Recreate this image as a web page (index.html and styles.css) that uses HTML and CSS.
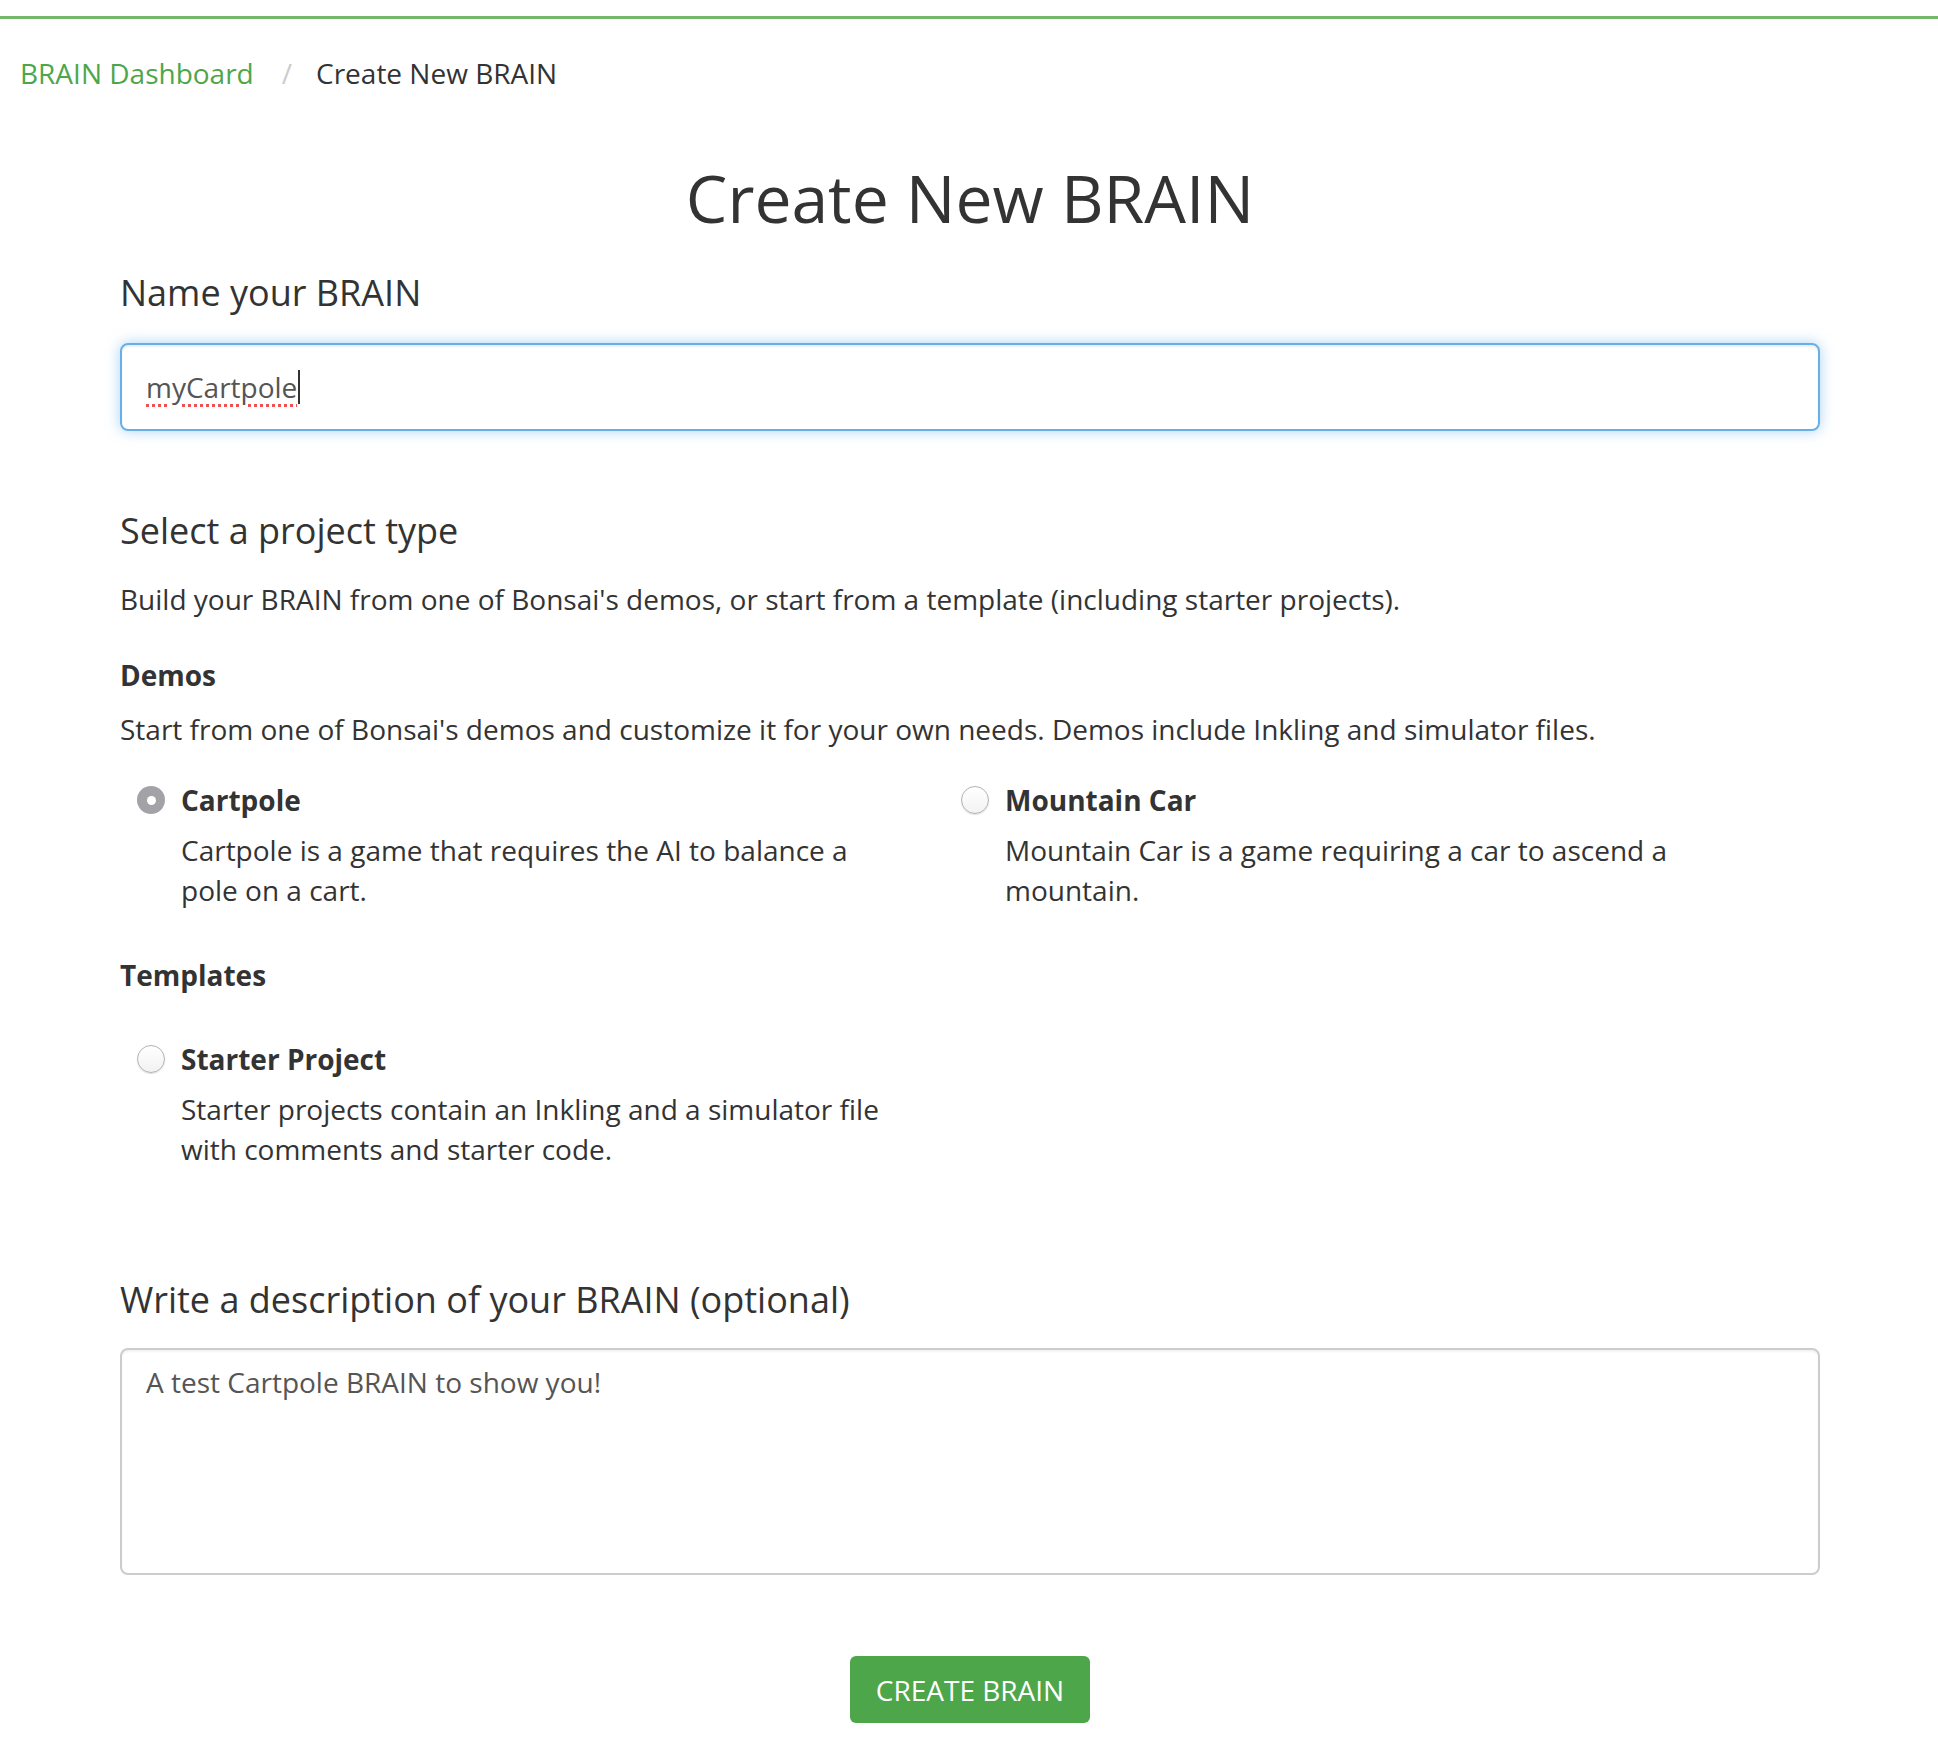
FILE: index.html
```html
<!DOCTYPE html>
<html lang="en">
<head>
<meta charset="utf-8">
<title>Create New BRAIN</title>
<link rel="stylesheet" href="styles.css">
</head>
<body>
<div class="topbar"></div>
<nav class="breadcrumb">
  <a class="crumb-link" href="#">BRAIN Dashboard</a>
  <span class="crumb-sep">/</span>
  <span class="crumb-current">Create New BRAIN</span>
</nav>
<main class="page">
  <h1 class="title">Create New BRAIN</h1>
  <h4 class="heading heading-name">Name your BRAIN</h4>
  <div class="input" role="textbox"><span class="typo">myCartpole</span><span class="caret"></span></div>

  <h4 class="heading heading-type">Select a project type</h4>
  <p class="text intro">Build your BRAIN from one of Bonsai's demos, or start from a template (including starter projects).</p>

  <div class="label label-demos">Demos</div>
  <p class="text sublead">Start from one of Bonsai's demos and customize it for your own needs. Demos include Inkling and simulator files.</p>

  <div class="options options-demos">
    <div class="option">
      <div class="option-head"><span class="radio radio-checked"></span><span class="option-title">Cartpole</span></div>
      <p class="option-desc">Cartpole is a game that requires the AI to balance a pole on a cart.</p>
    </div>
    <div class="option">
      <div class="option-head"><span class="radio"></span><span class="option-title">Mountain Car</span></div>
      <p class="option-desc">Mountain Car is a game requiring a car to ascend a mountain.</p>
    </div>
  </div>

  <div class="label label-templates">Templates</div>

  <div class="options options-templates">
    <div class="option">
      <div class="option-head"><span class="radio"></span><span class="option-title">Starter Project</span></div>
      <p class="option-desc">Starter projects contain an Inkling and a simulator file with comments and starter code.</p>
    </div>
  </div>

  <h4 class="heading heading-desc">Write a description of your BRAIN (optional)</h4>
  <div class="textarea" role="textbox">A test Cartpole BRAIN to show you!</div>

  <div class="actions"><button class="btn" type="button">CREATE BRAIN</button></div>
</main>
</body>
</html>
```
FILE: styles.css
```css
* { box-sizing: border-box; }
html, body { margin: 0; padding: 0; background: #fff; }
body {
  font-family: "Open Sans", "Liberation Sans", sans-serif;
  font-size: 28px;
  line-height: 40px;
  color: #333;
}
.topbar { margin-top: 16px; height: 3px; background: #74b86c; }

.breadcrumb {
  margin-top: 34px;
  padding-left: 20px;
  display: flex;
  align-items: baseline;
  height: 40px;
}
.crumb-link { color: #4ea64a; text-decoration: none; }
.crumb-sep { color: #ccc; margin: 0 24px 0 28px; }
.crumb-current { color: #333; }

.page { width: 1700px; margin-left: 120px; padding-bottom: 20px; }

.title {
  margin: 64px 0 0;
  font-size: 66px;
  line-height: 80px;
  font-weight: 400;
  text-align: center;
  color: #333;
}
.heading {
  margin: 0;
  font-size: 36px;
  line-height: 40px;
  font-weight: 400;
  color: #333;
}
.heading-name { margin-top: 36px; }
.heading-type { margin-top: 80px; }
.heading-desc { margin-top: 111px; }

.input {
  margin-top: 30px;
  height: 88px;
  border: 2px solid #66afe9;
  border-radius: 8px;
  padding: 22px 24px;
  color: #555;
  box-shadow: inset 0 2px 2px rgba(0,0,0,.075), 0 0 14px rgba(102,175,233,.55);
  display: flex;
  align-items: center;
}
.typo {
  text-decoration: underline dotted #f05050;
  text-decoration-thickness: 3px;
  text-underline-offset: 6px;
}
.caret { display: inline-block; width: 2px; height: 34px; background: #333; margin-left: 1px; }

.text { margin: 0; }
.intro { margin-top: 28px; }
.label { font-weight: 700; }
.label-demos { margin-top: 36px; }
.sublead { margin-top: 14px; }
.label-templates { margin-top: 45px; }

.options { display: grid; grid-template-columns: 824px 1fr; }
.options-demos { margin-top: 31px; }
.options-templates { margin-top: 44px; }
.option { padding-left: 17px; }
.option-head { display: flex; align-items: center; gap: 16px; height: 40px; }
.option-title { font-weight: 700; }
.option-desc { margin: 10px 0 0 44px; max-width: 712px; }

.radio {
  flex: none;
  width: 28px;
  height: 28px;
  border-radius: 50%;
  background: linear-gradient(#fff, #f2f2f2);
  border: 1.5px solid #b2b2b2;
  box-shadow: 0 1px 1px rgba(0,0,0,.12);
}
.radio-checked {
  background: #a2a2a7;
  border: none;
  box-shadow: none;
  display: flex;
  align-items: center;
  justify-content: center;
}
.radio-checked::after {
  content: "";
  width: 9px;
  height: 9px;
  border-radius: 50%;
  background: #fff;
}

.textarea {
  margin-top: 28px;
  height: 227px;
  border: 2px solid #ccc;
  border-radius: 8px;
  padding: 12px 24px;
  color: #555;
  box-shadow: inset 0 2px 2px rgba(0,0,0,.05);
}

.actions { margin-top: 81px; display: flex; justify-content: center; }
.btn {
  font-family: "Open Sans", "Liberation Sans", sans-serif;
  font-size: 28px;
  line-height: 40px;
  height: 67px;
  padding: 0 26px;
  border: none;
  border-radius: 6px;
  background: #4ea64a;
  color: #fff;
  cursor: pointer;
}
```
